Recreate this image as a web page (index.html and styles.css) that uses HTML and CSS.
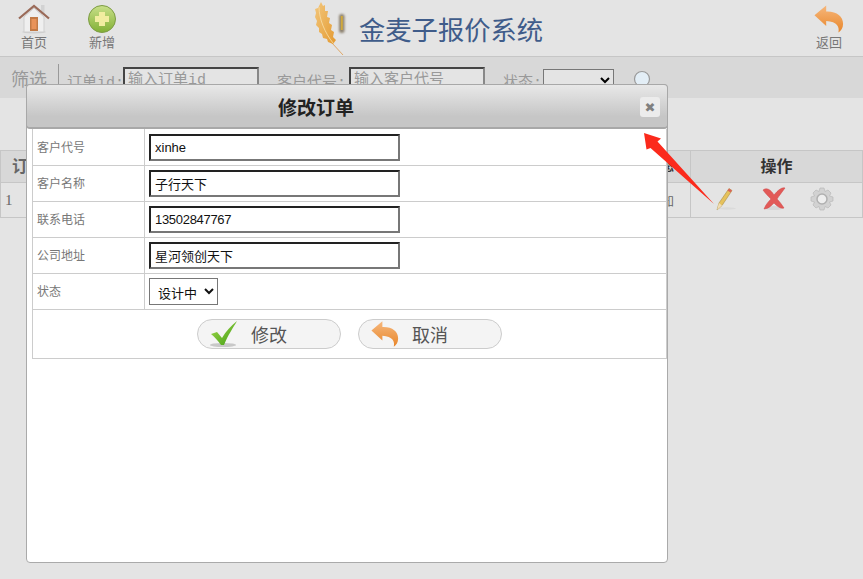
FILE: index.html
```html
<!DOCTYPE html>
<html lang="zh">
<head>
<meta charset="utf-8">
<title>金麦子报价系统</title>
<link rel="stylesheet" href="styles.css">
</head>
<body>
<svg class="defs" width="0" height="0" aria-hidden="true">
  <defs>
    <linearGradient id="backG" x1="0" y1="0" x2="0" y2="1"><stop offset="0" stop-color="#f6b77c"/><stop offset="1" stop-color="#e8862a"/></linearGradient>
    <linearGradient id="plusG" x1="0" y1="0" x2="0" y2="1"><stop offset="0" stop-color="#c9e08a"/><stop offset="1" stop-color="#82b035"/></linearGradient>
    <linearGradient id="checkG" x1="0" y1="0" x2="1" y2="1"><stop offset="0" stop-color="#a6dc4e"/><stop offset="1" stop-color="#3f9c12"/></linearGradient>
    <linearGradient id="wheatG" x1="0" y1="0" x2="1" y2="1"><stop offset="0" stop-color="#f2c67c"/><stop offset="1" stop-color="#e49a30"/></linearGradient>
    <symbol id="back" viewBox="0 0 32 30">
      <path d="M0.5 11 L13 0.5 V7 C24 6.5 31 12 31 20 C31 24.500 29 27.500 26 29.500 C27.500 24 25 17.500 13 17 V22.500 Z" fill="url(#backG)"/>
    </symbol>
  </defs>
</svg>

<header class="topbar">
  <a class="nav-item nav-home">
    <svg class="nav-icon" viewBox="0 0 32 32" width="32" height="32">
      <ellipse cx="16" cy="30" rx="12" ry="1.500" fill="#cfcfcf"/>
      <rect x="23" y="3" width="3.500" height="9" fill="#d2d2d2"/>
      <path d="M6 15 L16 6 L26 15 V30 H6 Z" fill="#efefef" stroke="#cfcfcf"/>
      <rect x="12" y="15" width="8" height="14" fill="#c27a46"/>
      <rect x="13.500" y="17" width="5" height="10" fill="#e8935a"/>
      <path d="M1 16.500 L16 4 L31 16.500" fill="none" stroke="#9a6a58" stroke-width="2.200"/>
    </svg>
    <span>首页</span>
  </a>
  <a class="nav-item nav-add">
    <svg class="nav-icon" viewBox="0 0 30 30" width="30" height="30">
      <circle cx="15" cy="15" r="13.500" fill="url(#plusG)" stroke="#7d9c45"/>
      <path d="M12 8 H18 V12 H22 V18 H18 V22 H12 V18 H8 V12 H12 Z" fill="#f1eda0"/>
    </svg>
    <span>新增</span>
  </a>
  <div class="brand">
    <svg class="wheat" viewBox="0 0 36 56" width="36" height="56">
      <path d="M30 54 L19 42" stroke="#e0a868" stroke-width="1"/>
      <path d="M8 1 L10 5 L12 4 L12 10 L15 10 L14 16 L17 17 L16 22 L19 24 L18 29 L21 31 L20 36 L23 39 L20 43 L15 41 L14 38 L10 37 L9 33 L6 31 L6 27 L3 24 L4 20 L2 16 L3 12 L2 8 L5 7 Z" fill="url(#wheatG)"/>
      <path d="M6 6 C6 18 12 32 20 42" stroke="#f9e0a8" stroke-width=".8" fill="none"/>
      <rect class="seal" x="26" y="13" width="5.500" height="19" rx="2.500" fill="#8d8270"/>
      <rect x="27.800" y="15" width="2" height="14" fill="#d0a93c"/>
    </svg>
    <h1>金麦子报价系统</h1>
  </div>
  <a class="nav-item nav-back">
    <svg class="nav-icon" width="30" height="30"><use href="#back"/></svg>
    <span>返回</span>
  </a>
</header>

<section class="filter">
  <span class="filter-title">筛选</span>
  <label class="filter-field field-id">订单id:<input class="filter-input" placeholder="输入订单id"></label>
  <label class="filter-field field-code">客户代号:<input class="filter-input" placeholder="输入客户代号"></label>
  <label class="filter-field field-state">状态:<select class="filter-select"><option></option></select></label>
  <svg class="search" viewBox="0 0 22 22" width="22" height="22">
    <circle cx="9" cy="9" r="7.500" fill="#e3eef6" stroke="#9a9a9a" stroke-width="1.200"/>
    <path d="M14.500 14.500 L20 20" stroke="#9a9a9a" stroke-width="2"/>
  </svg>
</section>

<table class="orders">
  <tr>
    <th class="c-id">订单id</th>
    <th class="c-mid">状态</th>
    <th class="c-op">操作</th>
  </tr>
  <tr>
    <td class="c-id">1</td>
    <td class="c-mid">通知</td>
    <td class="c-op">
      <div class="ops">
        <svg viewBox="0 0 24 24" width="24" height="24">
          <ellipse cx="13" cy="21.500" rx="9" ry="1.200" fill="#dadada"/>
          <path d="M3 23 L5 16 L15 1.500 L18 3.500 L8 18.500 Z" fill="#e6c25c" stroke="#a98d48" stroke-width=".6"/>
          <path d="M3 23 L5 16 L8 18.500 Z" fill="#f0dcb4"/>
          <path d="M15 1.500 L18 3.500 L16.500 5.500 L13.500 3.500 Z" fill="#d9655a"/>
        </svg>
        <svg viewBox="0 0 24 24" width="24" height="24">
          <ellipse cx="12" cy="21" rx="9" ry="2" fill="#d6d6d6"/>
          <path d="M1 3 C5 0 9 3 12 8 C16 3 20 0 23 1 C20 5 17 9 15 12 C18 15 20 18 22 21 C18 22 15 19 12 16 C9 19 6 22 2 22 C4 17 7 14 9 12 C6 9 3 6 1 3 Z" fill="#e25a58" stroke="#cf4444" stroke-width=".5"/>
        </svg>
        <svg viewBox="0 0 24 24" width="24" height="24">
          <path d="M10 1 H14 L15 4.500 L18 3 L21 6 L19.500 9 L23 10 V14 L19.500 15 L21 18 L18 21 L15 19.500 L14 23 H10 L9 19.500 L6 21 L3 18 L4.500 15 L1 14 V10 L4.500 9 L3 6 L6 3 L9 4.500 Z" fill="#d2d2d2" stroke="#b4b4b4" stroke-width=".6"/>
          <circle cx="12" cy="12" r="5" fill="#eee" stroke="#b0b0b0" stroke-width="1.500"/>
        </svg>
      </div>
    </td>
  </tr>
</table>

<div class="dialog">
  <div class="dialog-head">
    <h2>修改订单</h2>
    <button class="dialog-close" type="button">✖</button>
  </div>
  <div class="dialog-body">
    <table class="form">
      <tr><th>客户代号</th><td><input class="form-input" value="xinhe"></td></tr>
      <tr><th>客户名称</th><td><input class="form-input" value="子行天下"></td></tr>
      <tr><th>联系电话</th><td><input class="form-input form-digits" value="13502847767"></td></tr>
      <tr><th>公司地址</th><td><input class="form-input" value="星河领创天下"></td></tr>
      <tr><th>状态</th><td><select class="form-select"><option>设计中</option></select></td></tr>
      <tr>
        <td class="actions" colspan="2">
          <div class="action-row">
            <button class="pill" type="button">
              <svg viewBox="0 0 31 28" width="31" height="28">
                <ellipse cx="13" cy="25" rx="13" ry="2" fill="#c8c8c8"/>
                <path d="M1 14 L7 12 L12 18 C16 11 21 6 27 1 C23 8 18 15 14 25 H11 C8 21 5 17 1 14 Z" fill="url(#checkG)"/>
              </svg>
              <span>修改</span>
            </button>
            <button class="pill" type="button">
              <svg width="31" height="28"><use href="#back" width="28" height="28"/></svg>
              <span>取消</span>
            </button>
          </div>
        </td>
      </tr>
    </table>
  </div>
</div>

<svg class="pointer" viewBox="0 0 80 80" width="80" height="80">
  <path d="M2 2 L19 7.500 L15.500 10.500 L72 73 L8.500 17 L4.500 18.500 Z" fill="#fb2a1c"/>
</svg>
</body>
</html>
```
FILE: styles.css
```css
* { box-sizing: border-box; }
html, body { margin: 0; height: 579px; overflow: hidden; }
body {
  position: relative;
  background: #e4e4e4;
  font-family: "Noto Sans CJK SC", "Liberation Sans", sans-serif;
  color: #777;
}
.defs { position: absolute; }

.topbar {
  display: flex;
  align-items: flex-start;
  height: 57px;
  border-bottom: 1px solid #c6c6c6;
  padding-left: 18px;
}
.nav-item {
  display: flex;
  flex-direction: column;
  align-items: center;
  width: 32px;
  font-size: 13px;
  line-height: 14px;
  color: #777;
}
.nav-icon { display: block; margin-top: 4px; }
.nav-item span { margin-top: 1px; }
.nav-home .nav-icon { margin-top: 2px; }
.nav-home span { margin-top: 1px; }
.nav-add { margin-left: 36px; }
.nav-back { margin-left: auto; margin-right: 18px; }
.brand { display: flex; align-items: flex-start; margin-left: 195px; }
.wheat { display: block; margin-top: 1px; }
.seal { filter: blur(.8px); }
.brand h1 {
  margin: 11px 0 0 10px;
  font-size: 26.3px;
  line-height: 36px;
  font-weight: 400;
  color: #3f5c8a;
}

.filter {
  display: flex;
  align-items: center;
  height: 41px;
  background: #d8d8d8;
  padding: 0 0 0 11px;
  font-size: 15px;
  color: #999;
}
.filter-title {
  font-size: 18px;
  padding-right: 11px;
  border-right: 1px solid #999;
  line-height: 28px;
}
.filter-field {
  display: flex;
  align-items: center;
  margin-top: 6px;
  white-space: nowrap;
  font-family: "Liberation Mono", "Noto Sans CJK SC", monospace;
}
.field-id { margin-left: 8px; }
.field-code { margin-left: 18px; }
.field-state { margin-left: 18px; }
.filter-input {
  width: 136px;
  height: 27px;
  padding: 0 3px;
  border: 2px solid;
  border-color: #444 #888 #888 #444;
  background: #e4e4e4;
  font: 15px "Liberation Mono", "Noto Sans CJK SC", monospace;
}
.field-id .filter-input { margin-left: -1px; }
.field-code .filter-input { margin-left: 3px; }
.filter-input::placeholder { color: #999; opacity: 1; }
.filter-select {
  width: 71px;
  height: 23px;
  margin-left: 1px;
  background: #e4e4e4;
  border: 1px solid #777;
}
.search { margin: 6px 0 0 19px; }

.orders {
  width: 863px;
  margin-top: 52px;
  table-layout: fixed;
  border-collapse: collapse;
  color: #333;
}
.orders th, .orders td { border: 1px solid #c6c6c6; padding: 0; }
.orders th {
  height: 32px;
  padding-bottom: 3px;
  background: #d8d8d8;
  font-size: 16px;
  font-weight: 700;
}
.orders td { height: 35px; font-size: 12px; }
.orders th.c-id { text-align: left; padding-left: 11px; color: #666; }
.orders td.c-id { text-align: left; padding-left: 4px; font: 15px "Liberation Serif", serif; color: #666; }
.c-id { width: 620px; }
.orders th.c-mid { text-align: right; padding-right: 16px; font-size: 12px; }
.orders td.c-mid { text-align: right; padding-right: 16px; color: #666; }
.c-mid { width: 70px; }
.ops { display: flex; justify-content: flex-start; gap: 24px; padding: 0 0 2px 23px; }
.ops svg { display: block; }

.dialog {
  position: absolute;
  left: 26px;
  top: 84px;
  width: 642px;
  height: 479px;
  background: #fff;
  border: 1px solid #aaa;
  border-radius: 4px;
}
.dialog-head {
  position: relative;
  display: flex;
  align-items: center;
  justify-content: center;
  height: 45px;
  margin: -1px -1px 0;
  padding-right: 62px;
  background: linear-gradient(#e8e8e8, #c6c6c6 75%);
  border: 1px solid #a8a8a8;
  border-bottom-width: 2px;
  border-radius: 4px;
}
.dialog-head h2 {
  margin: 0;
  font-size: 19px;
  font-weight: 700;
  color: #222;
}
.dialog-close {
  position: absolute;
  right: 7px;
  top: 12px;
  width: 20px;
  height: 20px;
  padding: 0;
  border: 0;
  border-radius: 3px;
  background: #ececec;
  color: #808080;
  font-size: 13px;
  font-family: "DejaVu Sans", sans-serif;
}
.dialog-body { padding: 0 0 0 5px; }
.form {
  width: 635px;
  table-layout: fixed;
  border-collapse: collapse;
}
.form th, .form td { border: 1px solid #ccc; padding: 0; }
.form tr:first-child th, .form tr:first-child td { border-top: 0; padding-top: 1px; }
.form tr { height: 36px; }
.form th {
  width: 112px;
  padding: 0 0 2px 4px;
  text-align: left;
  font-size: 12px;
  font-weight: 400;
  color: #777;
}
.form td { padding-left: 4px; }
.form tr:first-child td { padding-left: 4px; }
.form-input {
  display: block;
  width: 251px;
  height: 27px;
  padding: 0 4px;
  border: 2px solid;
  border-color: #222 #777 #777 #222;
  background: #fff;
  color: #111;
  font: 13px "Liberation Sans", "Noto Sans CJK SC", sans-serif;
}
.form-digits { letter-spacing: -.3px; }
.form-select {
  display: block;
  width: 69px;
  height: 27px;
  padding: 3px 0 0 4px;
  background: #fff;
  border: 1px solid #777;
  color: #111;
  font: 13px "Noto Sans CJK SC", sans-serif;
}
.form td.actions { padding: 0; height: 49px; vertical-align: top; }
.action-row {
  display: flex;
  gap: 17px;
  padding: 9px 0 9px 164px;
}
.pill {
  display: flex;
  align-items: center;
  width: 144px;
  height: 30px;
  padding: 0 0 0 12px;
  border: 1px solid #ccc;
  border-radius: 15px;
  background: #f4f4f4;
  color: #555;
  font: 18px "Noto Sans CJK SC", sans-serif;
}
.pill svg { display: block; flex: none; }
.pill span { margin-left: 10px; }

.pointer {
  position: absolute;
  left: 642px;
  top: 131px;
}
```
